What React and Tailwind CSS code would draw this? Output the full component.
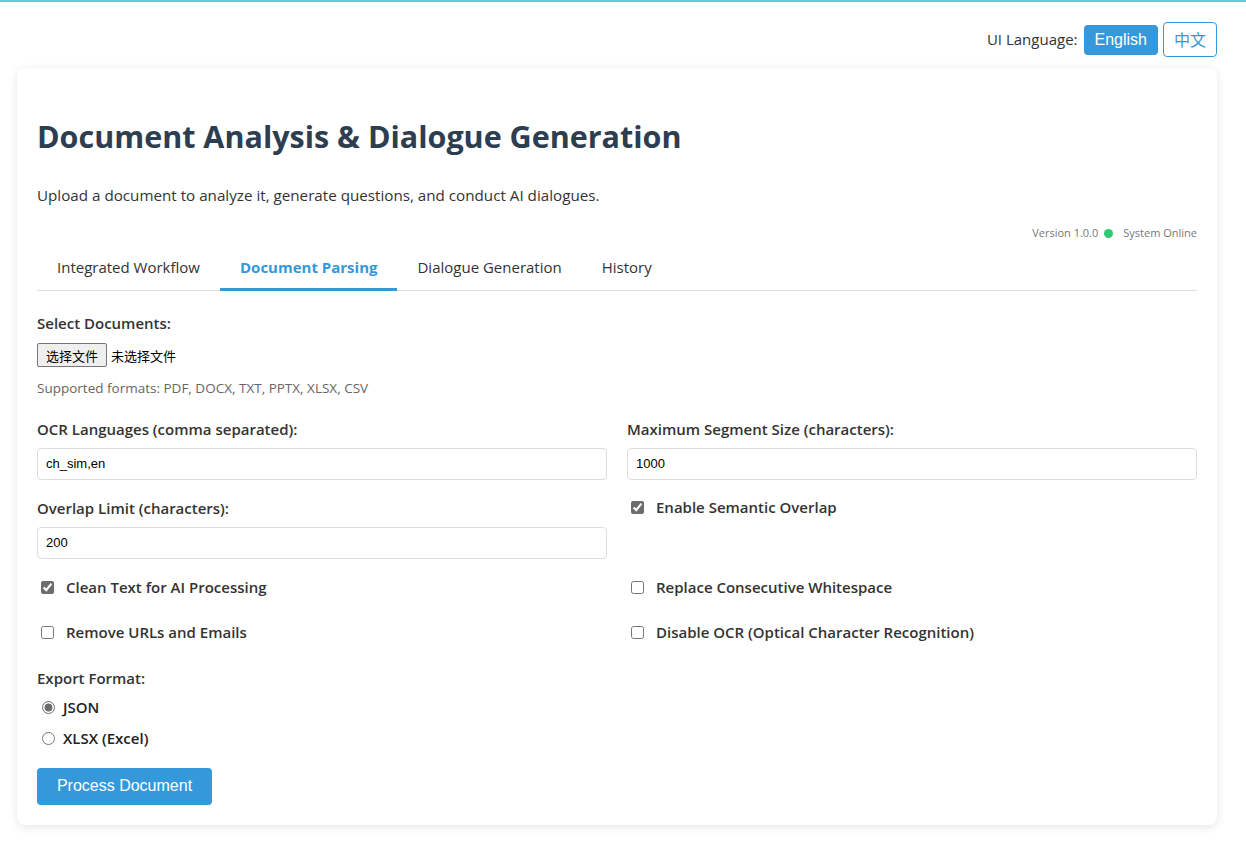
import React, { useState } from 'react';

const FONT = "font-['Open_Sans','Noto_Sans_CJK_SC',sans-serif]";

function Field({ label, value }) {
  return (
    <div className="flex flex-col">
      <label className="text-[15px] font-semibold text-[#333] leading-5 mb-[9px]">{label}</label>
      <input
        type="text"
        defaultValue={value}
        className="h-[32px] w-full px-2 rounded border border-[#ddd] bg-white text-[13px] text-black font-['Liberation_Sans',sans-serif] outline-none"
      />
    </div>
  );
}

function Check({ label, checked }) {
  return (
    <label className="flex items-center h-5 text-[15px] font-semibold text-[#333]">
      <input type="checkbox" defaultChecked={checked} className="ml-[4px] mr-[12px] w-[13px] h-[13px] accent-[#6d6d6d]" />
      {label}
    </label>
  );
}

function Radio({ label, checked }) {
  return (
    <label className="flex items-center h-5 text-[15px] font-semibold text-[#222]">
      <input type="radio" name="fmt" defaultChecked={checked} className="ml-[5px] mr-[8px] w-[13px] h-[13px] accent-[#6d6d6d]" />
      {label}
    </label>
  );
}

export default function App() {
  const [tab, setTab] = useState('Document Parsing');
  const tabs = ['Integrated Workflow', 'Document Parsing', 'Dialogue Generation', 'History'];

  return (
    <div className={`min-h-[865px] bg-white border-t-2 border-[#5fcfcf] ${FONT}`}>
      {/* language switch */}
      <div className="flex items-center justify-end gap-[5px] pr-[29px] pt-[20px] pb-[11px]">
        <span className="text-[15px] text-[#333] mr-[1px]">UI Language:</span>
        <button className="h-[30px] px-[11px] rounded bg-[#3498db] text-white text-[16px] font-['Liberation_Sans',sans-serif]">English</button>
        <button className="h-[35px] px-[10px] rounded border border-[#3498db] bg-white text-[#3498db] text-[16px]">中文</button>
      </div>

      {/* main card */}
      <div className="mx-[17px] w-[1200px] rounded-lg bg-white shadow-[0_2px_10px_rgba(0,0,0,0.1)] px-5 pt-[48px] pb-5">
        <h1 className="text-[30.5px] font-bold text-[#2c3e50] leading-10">Document Analysis &amp; Dialogue Generation</h1>
        <p className="mt-[28px] text-[15.2px] text-[#333]">Upload a document to analyze it, generate questions, and conduct AI dialogues.</p>

        <div className="flex items-center justify-end gap-[4px] mt-[18px] text-[11px] text-[#777]">
          <span>Version 1.0.0</span>
          <span className="w-[9px] h-[9px] rounded-full bg-[#2ecc71] mx-[2px]"></span>
          <span className="ml-[4px]">System Online</span>
        </div>

        {/* tabs */}
        <div className="flex border-b border-[#ddd] mt-[4px]">
          {tabs.map(t => (
            <button
              key={t}
              onClick={() => setTab(t)}
              className={`h-[46px] px-5 text-[15px] -mb-px border-b-[3px] ${
                t === tab ? 'border-[#3498db] text-[#3498db] font-bold' : 'border-transparent text-[#333]'
              }`}
            >
              {t}
            </button>
          ))}
        </div>

        {/* form */}
        <div className="mt-[22px]">
          <div className="text-[15px] font-semibold text-[#333] leading-5">Select Documents:</div>
          <div className="flex items-center mt-[10px] text-[13px] font-['Noto_Sans_CJK_SC',sans-serif]">
            <button className="h-[24px] px-[8px] rounded-[2px] border border-[#767676] bg-[#efefef] text-black">选择文件</button>
            <span className="ml-[4px] text-black">未选择文件</span>
          </div>
          <div className="mt-[11px] text-[13.5px] text-[#666]">Supported formats: PDF, DOCX, TXT, PPTX, XLSX, CSV</div>
        </div>

        <div className="grid grid-cols-2 gap-x-5 mt-[20px]">
          <div className="flex flex-col gap-[18px]">
            <Field label="OCR Languages (comma separated):" value="ch_sim,en" />
            <Field label="Overlap Limit (characters):" value="200" />
          </div>
          <div className="flex flex-col gap-[18px]">
            <Field label="Maximum Segment Size (characters):" value="1000" />
            <Check label="Enable Semantic Overlap" checked />
          </div>
        </div>

        <div className="grid grid-cols-2 gap-x-5 gap-y-[25px] mt-[19px]">
          <Check label="Clean Text for AI Processing" checked />
          <Check label="Replace Consecutive Whitespace" />
          <Check label="Remove URLs and Emails" />
          <Check label="Disable OCR (Optical Character Recognition)" />
        </div>

        <div className="mt-[25px]">
          <div className="text-[15px] font-semibold text-[#333] leading-5">Export Format:</div>
          <div className="flex flex-col gap-[11px] mt-[10px]">
            <Radio label="JSON" checked />
            <Radio label="XLSX (Excel)" />
          </div>
        </div>

        <button className="mt-[19px] h-[37px] w-[175px] rounded bg-[#3498db] text-white text-[16px] font-['Liberation_Sans',sans-serif]">
          Process Document
        </button>
      </div>
    </div>
  );
}
